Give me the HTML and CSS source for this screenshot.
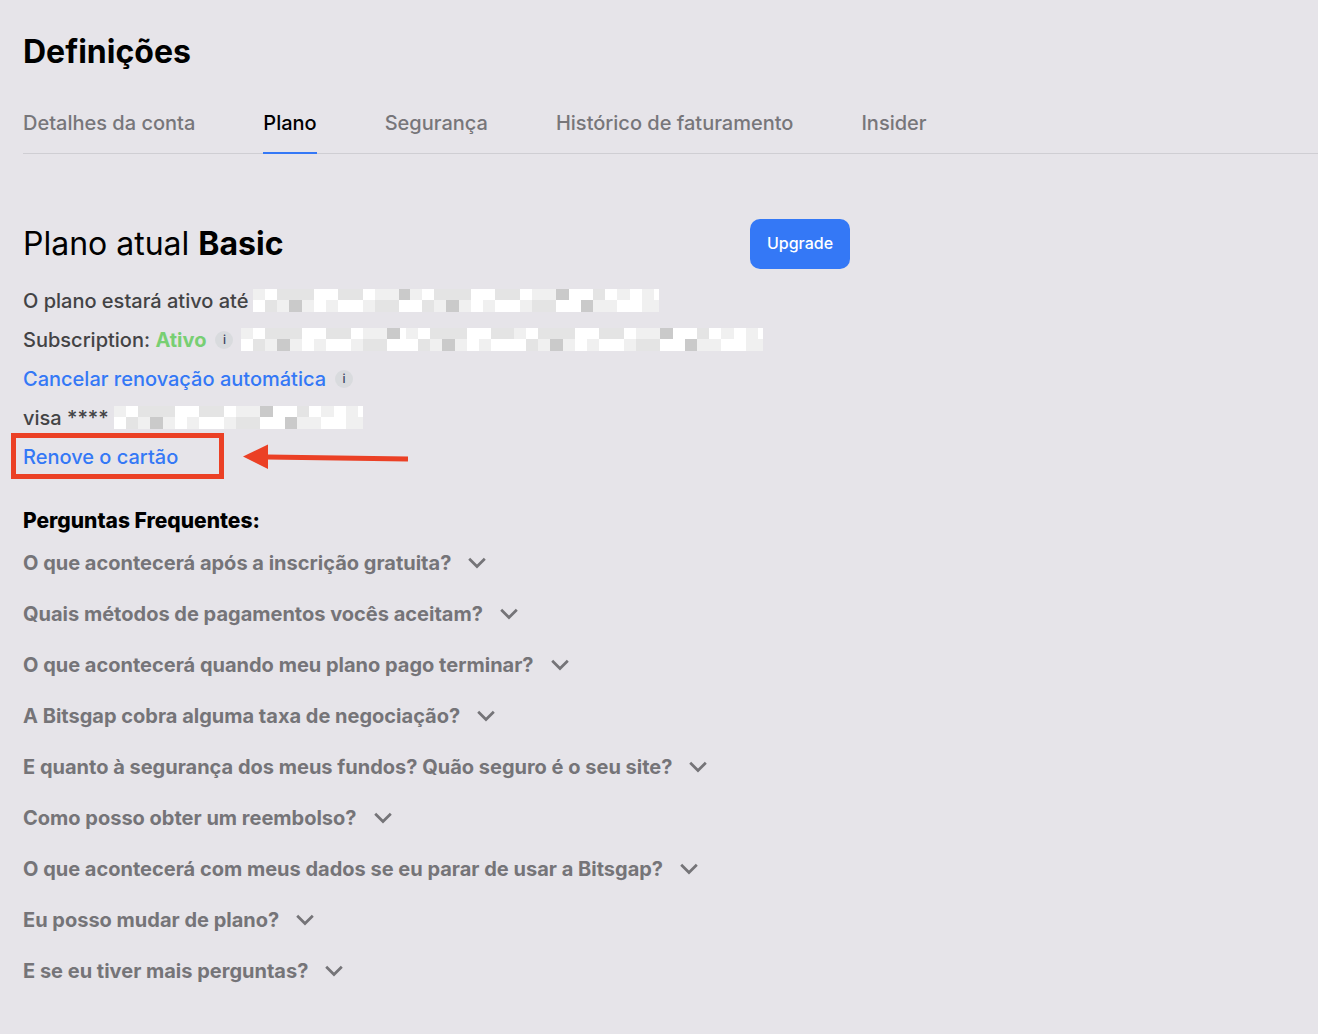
FILE: index.html
```html
<!DOCTYPE html>
<html lang="pt">
<head>
  <meta charset="UTF-8">
  <meta name="viewport" content="width=device-width, initial-scale=1">
  <title>Definições</title>
  <link rel="stylesheet" href="styles.css">
</head>
<body>

  <!-- shared shapes -->
  <svg class="sprite" aria-hidden="true">
    <symbol id="chevron" viewBox="0 0 18 12">
      <path d="M1.2 1.7 L9 9.5 L16.8 1.7" fill="none" stroke="currentColor" stroke-width="2.7"/>
    </symbol>
    <g id="mosaic" shape-rendering="crispEdges">
      <rect width="249" height="23" fill="#fff"/>
      <path fill="#f0f0f0" d="M0 0h12v11H0z M122 0h24v11h-24z M207 0h13v11h-13z M232 0h12v11h-12z M24 11h12v12H24z M49 11h12v12H49z M73 11h12v12H73z M110 11h12v12h-12z M183 11h24v12h-24z M232 11h17v12h-17z"/>
      <path fill="#e4e4e4" d="M24 0h37v11H24z M85 0h25v11H85z M183 0h12v11h-12z M12 11h12v12H12z M122 11h24v12h-24z"/>
      <path fill="#cacaca" d="M146 0h13v11h-13z M36 11h13v12H36z M171 11h12v12h-12z"/>
    </g>
  </svg>

  <main class="settings">
    <h1 class="title">Definições</h1>

    <nav class="tabs">
      <a class="tab" href="#conta">Detalhes da conta</a>
      <a class="tab tab-active" href="#plano" aria-current="page">Plano</a>
      <a class="tab" href="#seguranca">Segurança</a>
      <a class="tab" href="#historico">Histórico de faturamento</a>
      <a class="tab" href="#insider">Insider</a>
    </nav>

    <section class="plan" id="plano">
      <div class="plan-header">
        <h2 class="plan-name">Plano atual <strong>Basic</strong></h2>
        <button class="upgrade" type="button">Upgrade</button>
      </div>

      <div class="row">
        <span>O plano estará ativo até</span>
        <svg class="hidden-data" width="406" height="23" aria-hidden="true">
          <use href="#mosaic"/>
          <use href="#mosaic" x="157"/>
        </svg>
      </div>
      <div class="row">
        <span>Subscription: <strong class="active">Ativo</strong></span>
        <button class="info" type="button">i</button>
        <svg class="hidden-data" width="522" height="23" aria-hidden="true">
          <use href="#mosaic"/>
          <use href="#mosaic" x="165"/>
          <use href="#mosaic" x="273"/>
        </svg>
      </div>
      <div class="row">
        <a class="link" href="#cancelar">Cancelar renovação automática</a>
        <button class="info" type="button">i</button>
      </div>
      <div class="row">
        <span>visa ****</span>
        <svg class="hidden-data" width="249" height="23" aria-hidden="true">
          <use href="#mosaic"/>
        </svg>
      </div>
      <div class="row marked">
        <a class="link" href="#cartao">Renove o cartão</a>
        <svg class="arrow" width="166" height="26" viewBox="0 0 166 26" aria-hidden="true">
          <path d="M0 12.5 L25 .5 V25 Z" fill="#eb4025"/>
          <path d="M24 13 L165 15" stroke="#eb4025" stroke-width="5"/>
        </svg>
      </div>
    </section>

    <section class="faq">
      <h3 class="faq-title">Perguntas Frequentes:</h3>
      <button class="question" type="button">O que acontecerá após a inscrição gratuita? <svg class="chevron"><use href="#chevron"/></svg></button>
      <button class="question" type="button">Quais métodos de pagamentos vocês aceitam? <svg class="chevron"><use href="#chevron"/></svg></button>
      <button class="question" type="button">O que acontecerá quando meu plano pago terminar? <svg class="chevron"><use href="#chevron"/></svg></button>
      <button class="question" type="button">A Bitsgap cobra alguma taxa de negociação? <svg class="chevron"><use href="#chevron"/></svg></button>
      <button class="question" type="button">E quanto à segurança dos meus fundos? Quão seguro é o seu site? <svg class="chevron"><use href="#chevron"/></svg></button>
      <button class="question" type="button">Como posso obter um reembolso? <svg class="chevron"><use href="#chevron"/></svg></button>
      <button class="question" type="button">O que acontecerá com meus dados se eu parar de usar a Bitsgap? <svg class="chevron"><use href="#chevron"/></svg></button>
      <button class="question" type="button">Eu posso mudar de plano? <svg class="chevron"><use href="#chevron"/></svg></button>
      <button class="question" type="button">E se eu tiver mais perguntas? <svg class="chevron"><use href="#chevron"/></svg></button>
    </section>
  </main>

</body>
</html>
```
FILE: styles.css
```css
*,
*::before {
  box-sizing: border-box;
}

body {
  margin: 0;
  background: #e6e4e9;
  color: #434345;
  font-family: Inter, "Liberation Sans", sans-serif;
  font-size: 20px;
  font-weight: 500;
}

h1, h2, h3 {
  margin: 0;
  color: #000;
}

a {
  text-decoration: none;
}

button {
  border: 0;
  padding: 0;
  font-family: inherit;
  cursor: pointer;
}

.sprite {
  position: absolute;
  width: 0;
  height: 0;
}

.settings {
  padding: 32px 0 32px 23px;
}

.title {
  font-size: 32px;
  font-weight: 700;
  line-height: 40px;
}

/* tabs */
.tabs {
  display: flex;
  gap: 68px;
  margin-top: 32px;
  border-bottom: 1px solid #cfced3;
}

.tab {
  margin-bottom: -1px;
  padding-bottom: 10px;
  border-bottom: 2px solid transparent;
  color: #77767a;
  line-height: 38px;
}

.tab-active {
  border-color: #3478f6;
  color: #000;
}

/* current plan */
.plan {
  margin-top: 65px;
}

.plan-header {
  display: flex;
  justify-content: space-between;
  align-items: center;
  max-width: 827px;
  margin-bottom: 12px;
}

.plan-name {
  padding-bottom: 2px;
  font-size: 32px;
  font-weight: 400;
}

.plan-name strong {
  font-weight: 700;
}

.upgrade {
  width: 100px;
  height: 50px;
  padding-bottom: 2px;
  border-radius: 10px;
  background: #3478f6;
  color: #fff;
  font-size: 16px;
  font-weight: 500;
}

.row {
  display: flex;
  align-items: center;
  height: 39px;
}

.active {
  color: #78cf73;
  font-weight: 700;
}

.link {
  color: #3478f6;
}

.info {
  width: 18px;
  height: 18px;
  margin: 0 3px 0 9px;
  border-radius: 50%;
  background: #d9dbde;
  color: #3b4260;
  font-size: 12px;
  font-weight: 500;
  line-height: 18px;
}

.hidden-data {
  flex: none;
  margin-left: 5px;
}

/* red frame and arrow round the card link */
.marked {
  position: relative;
}

.marked::before {
  content: "";
  position: absolute;
  top: -4px;
  left: -12px;
  width: 213px;
  height: 46px;
  border: 5px solid #eb4025;
  pointer-events: none;
}

.arrow {
  position: absolute;
  top: 7px;
  left: 220px;
}

/* faq */
.faq {
  display: flex;
  flex-direction: column;
  align-items: flex-start;
  margin-top: 29px;
}

.faq-title {
  font-size: 21px;
  font-weight: 800;
  line-height: 32px;
}

.question {
  display: flex;
  align-items: center;
  gap: 17px;
  height: 51px;
  background: none;
  color: #757478;
  font-size: 20px;
  font-weight: 700;
  text-align: left;
}

.chevron {
  width: 18px;
  height: 12px;
}
```
